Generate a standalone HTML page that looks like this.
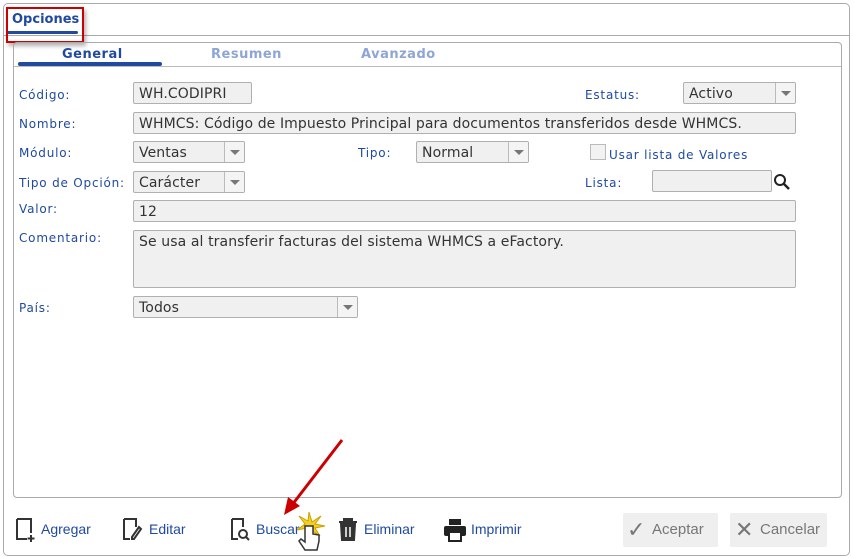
<!DOCTYPE html>
<html><head><meta charset="utf-8"><style>
*{box-sizing:border-box;margin:0;padding:0}
body{width:854px;height:558px;background:#fff;font-family:"DejaVu Sans","Liberation Sans",sans-serif;position:relative;overflow:hidden}
.a{position:absolute}
.lbl{position:absolute;font-size:12px;color:#1f4aa0;letter-spacing:0.8px}
.inp{position:absolute;background:#f0f0f0;border:1px solid #b0b0b0;border-radius:2px;font-size:14px;color:#333;padding:2px 5px 0;height:22px;line-height:18px;white-space:nowrap;overflow:hidden;letter-spacing:0.1px}
.dd{position:absolute;right:0;top:0;width:20px;height:20px;border-left:1px solid #bbb;background:#f4f4f4}
.dd:after{content:"";position:absolute;left:5px;top:8px;border-left:5px solid transparent;border-right:5px solid transparent;border-top:5px solid #777}
.btn{position:absolute;font-size:14px;color:#1f4aa0;font-family:"Liberation Sans",sans-serif;top:521px}
.gb{position:absolute;top:513px;height:34px;background:#efefef;border-radius:2px;color:#777;font-size:15px;font-family:"Liberation Sans",sans-serif;line-height:34px}
</style></head><body>
<div class="a" style="left:3px;top:3px;width:847px;height:553px;border:1px solid #aaa;border-radius:5px"></div>
<div class="a" style="left:4px;top:35px;width:845px;border-top:1px solid #aaa"></div>
<div class="a" style="left:12px;top:12px;font-size:13px;font-weight:bold;color:#1f4aa0">Opciones</div>
<div class="a" style="left:6px;top:31px;width:72px;height:3px;background:#1f4aa0;border-radius:2px"></div>
<div class="a" style="left:6px;top:7px;width:78px;height:36px;border:2px solid #c00;box-shadow:2px 3px 4px rgba(0,0,0,.3)"></div>
<div class="a" style="left:13px;top:42px;width:829px;height:456px;border:1px solid #aaa;border-radius:4px"></div>
<div class="a" style="left:14px;top:66px;width:827px;border-top:1px solid #bbb"></div>
<div class="a" style="left:62px;top:47px;font-size:13px;font-weight:bold;color:#1f4aa0;letter-spacing:0.5px">General</div>
<div class="a" style="left:211px;top:47px;font-size:13px;font-weight:bold;color:#8ea6d6;letter-spacing:0.5px">Resumen</div>
<div class="a" style="left:361px;top:47px;font-size:13px;font-weight:bold;color:#8ea6d6;letter-spacing:0.5px">Avanzado</div>
<div class="a" style="left:18px;top:62px;width:144px;height:4px;background:#1f4aa0;border-radius:2px"></div>

<div class="lbl" style="left:19px;top:88px">Código:</div>
<div class="inp" style="left:133px;top:82px;width:119px">WH.CODIPRI</div>
<div class="lbl" style="left:585px;top:88px">Estatus:</div>
<div class="inp" style="left:683px;top:82px;width:113px">Activo<div class="dd"></div></div>

<div class="lbl" style="left:19px;top:117px">Nombre:</div>
<div class="inp" style="left:133px;top:112px;width:663px">WHMCS: Código de Impuesto Principal para documentos transferidos desde WHMCS.</div>

<div class="lbl" style="left:19px;top:146px">Módulo:</div>
<div class="inp" style="left:133px;top:141px;width:112px">Ventas<div class="dd"></div></div>
<div class="lbl" style="left:358px;top:146px">Tipo:</div>
<div class="inp" style="left:416px;top:141px;width:113px">Normal<div class="dd"></div></div>
<div class="a" style="left:590px;top:144px;width:16px;height:16px;border:1px solid #bbb;background:#f2f2f2"></div>
<div class="lbl" style="left:609px;top:148px">Usar lista de Valores</div>

<div class="lbl" style="left:19px;top:176px">Tipo de Opción:</div>
<div class="inp" style="left:133px;top:171px;width:112px">Carácter<div class="dd"></div></div>
<div class="lbl" style="left:585px;top:176px">Lista:</div>
<div class="inp" style="left:652px;top:170px;width:120px"></div>
<svg class="a" style="left:773px;top:173px" width="18" height="18"><circle cx="7" cy="7" r="5" fill="none" stroke="#222" stroke-width="2"/><line x1="11" y1="11" x2="16" y2="16" stroke="#222" stroke-width="2.5"/></svg>

<div class="lbl" style="left:19px;top:202px">Valor:</div>
<div class="inp" style="left:133px;top:200px;width:663px">12</div>

<div class="lbl" style="left:19px;top:231px">Comentario:</div>
<div class="inp" style="left:133px;top:230px;width:663px;height:58px">Se usa al transferir facturas del sistema WHMCS a eFactory.</div>

<div class="lbl" style="left:19px;top:301px">País:</div>
<div class="inp" style="left:133px;top:296px;width:225px">Todos<div class="dd"></div></div>

<svg class="a" style="left:270px;top:435px" width="80" height="85"><line x1="72" y1="5" x2="22" y2="70" stroke="#c00" stroke-width="3"/><polygon points="14,80 18,62 30,71" fill="#c00"/></svg>

<svg class="a" style="left:14px;top:517px" width="24" height="26"><path d="M3 2h14v14M3 2v20h10M17 18v7M13.5 21.5h7" fill="none" stroke="#333" stroke-width="2"/></svg>
<div class="btn" style="left:41px">Agregar</div>
<svg class="a" style="left:121px;top:517px" width="24" height="26"><path d="M3 2h12v8M3 2v20h6M18 10l-7 10v2h2l7-10z" fill="none" stroke="#333" stroke-width="2"/></svg>
<div class="btn" style="left:149px">Editar</div>
<svg class="a" style="left:229px;top:517px" width="24" height="26"><path d="M3 2h11v8M3 2v20h6" fill="none" stroke="#333" stroke-width="2"/><circle cx="14" cy="17" r="4" fill="none" stroke="#333" stroke-width="2"/><line x1="17" y1="20" x2="20" y2="23" stroke="#333" stroke-width="2"/></svg>
<div class="btn" style="left:256px">Buscar</div>
<svg class="a" style="left:293px;top:510px" width="40" height="48"><polygon points="16,2 19,12 28,6 22,14 32,16 22,18 27,26 18,20 14,28 14,18 4,20 12,14 6,6 15,11" fill="#f5d020" stroke="#c9a000"/><path d="M12 16v16l-4-3-2 2 6 9h12l2-9v-6l-6-1v-8z" fill="#fff" stroke="#333" stroke-width="1.5"/></svg>
<svg class="a" style="left:337px;top:517px" width="22" height="26"><path d="M2 5h18M7 5V2h8v3M4 7l1 16h12l1-16z" fill="#333" stroke="#333" stroke-width="2"/><path d="M9 10v10M13 10v10" stroke="#fff" stroke-width="1.5"/></svg>
<div class="btn" style="left:364px">Eliminar</div>
<svg class="a" style="left:443px;top:517px" width="24" height="26"><rect x="6" y="2" width="12" height="6" fill="#222"/><rect x="1" y="9" width="22" height="10" rx="2" fill="#222"/><rect x="6" y="15" width="12" height="9" fill="#fff" stroke="#222" stroke-width="2"/></svg>
<div class="btn" style="left:471px">Imprimir</div>

<div class="gb" style="left:623px;width:95px"><span style="position:absolute;left:4px;font-size:22px">✓</span><span style="position:absolute;left:29px">Aceptar</span></div>
<div class="gb" style="left:730px;width:97px"><span style="position:absolute;left:5px;font-size:22px">✕</span><span style="position:absolute;left:30px">Cancelar</span></div>
</body></html>
